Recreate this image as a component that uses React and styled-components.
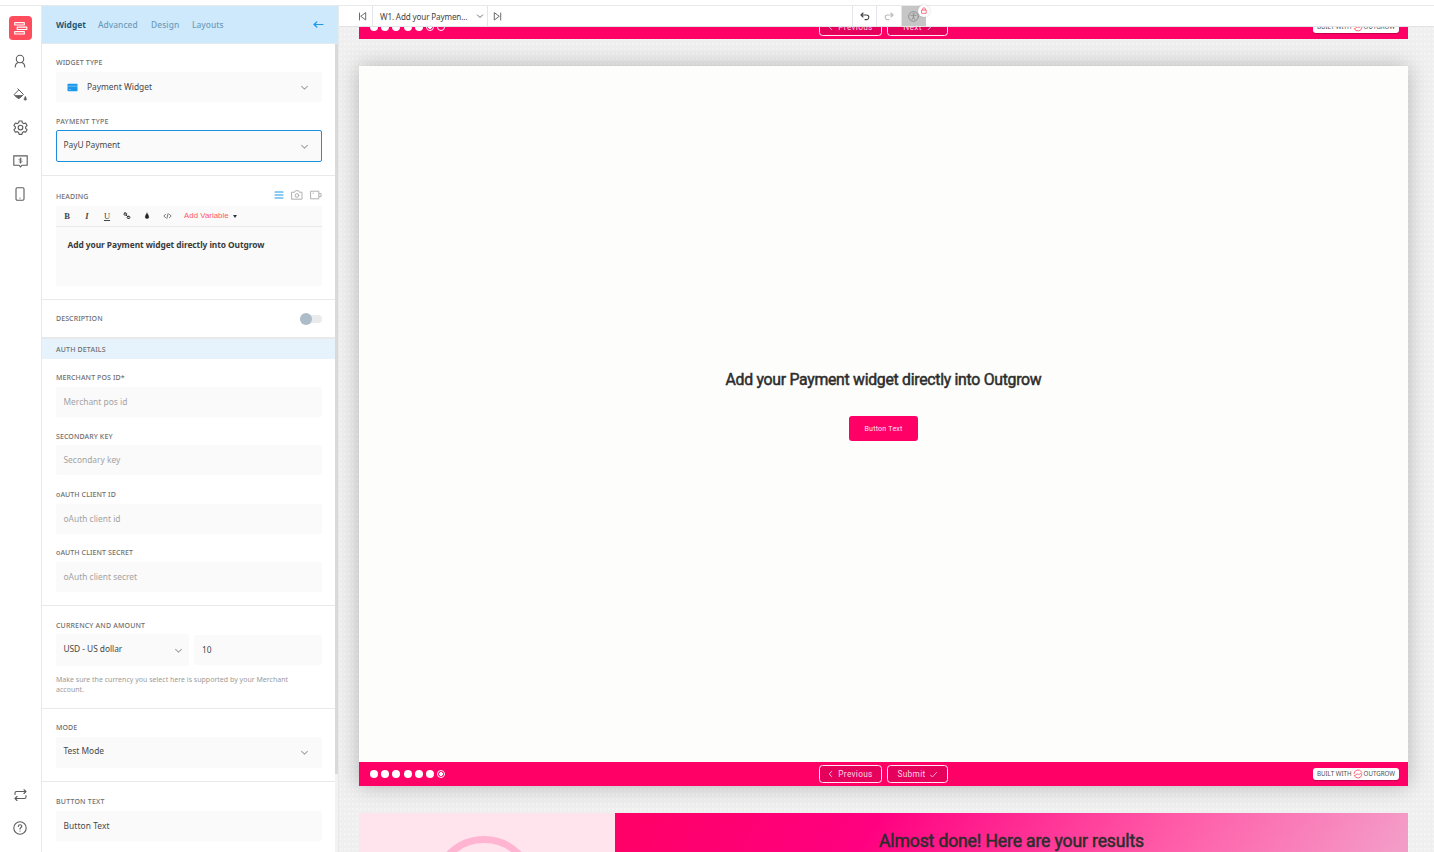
import React from 'react';
import styled, { createGlobalStyle, css } from 'styled-components';

const GlobalStyle = createGlobalStyle`
	* {
		box-sizing: border-box;
	}
	body {
		margin: 0;
		background: #fff;
		font-family: "Noto Sans", "Open Sans", sans-serif;
		overflow: hidden;
	}
`;

const Page = styled.div`
	display: flex;
	flex-direction: column;
	width: 1434px;
	height: 852px;
	padding-top: 5px;
	overflow: hidden;
`;

const Main = styled.div`
	display: flex;
	flex: 1;
	min-height: 0;
	border-top: 1px solid #e7e9eb;
`;

const Svg = styled.svg`
	display: block;
	flex: none;
	fill: none;
	stroke: ${p => p.$color || '#5c5c5c'};
	stroke-width: ${p => p.$stroke || 1.1};
	stroke-linecap: round;
	stroke-linejoin: round;
`;

const Text = styled.span`
	display: block;
	white-space: nowrap;
	letter-spacing: ${p => p.$ls || 0}px;
`;

/* ---------- left rail ---------- */

const Rail = styled.nav`
	display: flex;
	flex-direction: column;
	align-items: center;
	width: 42px;
	padding: 10px 1px 16px 0;
	border-right: 1px solid #e7e9eb;
	flex: none;
`;

const Logo = styled.div`
	display: flex;
	align-items: center;
	justify-content: center;
	width: 23px;
	height: 24px;
	border-radius: 4px;
	background: #ff4d5e;
	margin-bottom: 13px;
`;

const RailItem = styled.div`
	display: flex;
	align-items: center;
	justify-content: center;
	width: 16px;
	height: 16px;
	margin-bottom: ${p => p.$gap || 17}px;
`;

const Spacer = styled.div`
	flex: 1;
`;

/* ---------- settings panel ---------- */

const Panel = styled.aside`
	display: flex;
	flex-direction: column;
	width: 297px;
	flex: none;
	border-right: 1px solid #e7e9eb;
`;

const Tabs = styled.div`
	display: flex;
	align-items: center;
	height: 38px;
	flex: none;
	padding: 0 14px;
	background: #cfe9fc;
	border-bottom: 1px solid #e3eaf0;
`;

const Tab = styled(Text)`
	width: ${p => p.$width}px;
	font-size: 8.4px;
	line-height: 12px;
	font-weight: ${p => (p.$active ? 700 : 500)};
	color: ${p => (p.$active ? '#1d5878' : '#6c9db9')};
`;

const Scroller = styled.div`
	display: flex;
	flex: 1;
	min-height: 0;
`;

const Settings = styled.div`
	width: 293px;
	overflow: hidden;
`;

const Track = styled.div`
	width: 3px;
	background: #f2f2f2;
`;

const Thumb = styled.div`
	height: 730px;
	background: #d9d9d9;
`;

const Section = styled.section`
	height: ${p => p.$height}px;
	padding: ${p => p.$top || 0}px 13px 0 14px;
	border-bottom: ${p => p.$border || 1}px solid #e7e9eb;
`;

const Label = styled(Text)`
	height: 10px;
	font-size: 7px;
	line-height: 10px;
	font-weight: 500;
	letter-spacing: ${p => p.$ls || 0.08}px;
	color: #6f6f6f;
	margin-bottom: ${p => (p.$gap === undefined ? 4 : p.$gap)}px;
`;

const Field = styled.div`
	display: flex;
	align-items: center;
	justify-content: space-between;
	width: ${p => (p.$width ? `${p.$width}px` : 'auto')};
	height: ${p => p.$height || 30}px;
	padding: 0 ${p => p.$right || 13}px 0 ${p => p.$left || 7.5}px;
	margin-bottom: ${p => p.$gap || 0}px;
	border-radius: 2px;
	background: #fafafa;
	font-size: 8.4px;
	line-height: 12px;
	color: ${p => (p.$placeholder ? '#a3a3a3' : '#484848')};
	${p => p.$raise && css`
		> span {
			margin-bottom: ${p.$raise}px;
		}
	`}
	${p => p.$focused && css`
		border: 1px solid #1c8fdc;
		padding-left: 6.5px;
		padding-right: 12px;
	`}
`;

const WithIcon = styled.div`
	display: flex;
	align-items: center;
	gap: 9px;
`;

const Row = styled.div`
	display: flex;
	align-items: center;
	justify-content: ${p => (p.$between ? 'space-between' : 'flex-start')};
	gap: ${p => p.$gap || 0}px;
	${p => p.$height && css`height: ${p.$height}px;`}
`;

const HeadingRow = styled(Row)`
	align-items: flex-start;
	height: 17px;
	padding-top: 3px;
`;

const HeadingIcons = styled(Row)`
	height: 6px;
`;

const Editor = styled.div`
	height: 80px;
	background: #fafafa;
	border-radius: 2px;
`;

const EditorBar = styled.div`
	display: flex;
	align-items: center;
	height: 21px;
	padding: 0 0 1px 6px;
	border-bottom: 1px solid #e7e9eb;
`;

const Tool = styled.div`
	display: flex;
	align-items: center;
	justify-content: center;
	width: 10px;
	height: 12px;
	margin-right: 10px;
	font: ${p => p.$style || 'normal'} ${p => p.$weight || 400} 8.5px/12px "Liberation Serif", serif;
	text-decoration: ${p => (p.$underline ? 'underline' : 'none')};
	color: #444;
`;

const AddVariable = styled.div`
	display: flex;
	align-items: center;
	gap: 4px;
	margin: 1px 0 0 2px;
	font: 7.8px/12px "Liberation Sans", sans-serif;
	color: #ff5468;
`;

const Caret = styled.i`
	border: 2.5px solid transparent;
	border-top: 3px solid #333;
	border-bottom: 0;
	margin-top: 1px;
`;

const EditorText = styled(Text)`
	padding: 11px 0 0 11.5px;
	font-size: 8.4px;
	line-height: 13px;
	font-weight: 700;
	color: #3a3a3a;
`;

const Toggle = styled.div`
	display: flex;
	align-items: center;
	width: 22px;
	height: 8px;
	border-radius: 4px;
	background: #e9ebed;
`;

const Knob = styled.div`
	width: 12px;
	height: 12px;
	border-radius: 50%;
	background: #adbcc9;
`;

const SubHeader = styled.div`
	display: flex;
	align-items: center;
	height: 20px;
	padding: 2px 0 0 14px;
	background: #e6f3fc;
`;

const Note = styled.div`
	margin-top: 9px;
	font-size: 7px;
	line-height: 10px;
	color: #9b9b9b;
`;

/* ---------- work area ---------- */

const Work = styled.main`
	display: flex;
	flex-direction: column;
	flex: 1;
	min-width: 0;
`;

const Toolbar = styled.div`
	display: flex;
	height: 21px;
	flex: none;
	background: #fff;
	border-bottom: 1px solid #e2e4e6;
`;

const Cell = styled.div`
	display: flex;
	align-items: center;
	justify-content: ${p => p.$justify || 'center'};
	position: relative;
	width: ${p => p.$width}px;
	padding: ${p => p.$pad || 0};
	background: ${p => p.$bg || 'transparent'};
	border-right: ${p => (p.$line ? '1px solid #e2e6ea' : 'none')};
	font-size: 8.1px;
	color: #444;
`;

const LockBadge = styled.div`
	position: absolute;
	top: -1px;
	right: -4px;
	display: flex;
	align-items: center;
	justify-content: center;
	width: 12px;
	height: 12px;
	padding-bottom: 1px;
	border-radius: 50%;
	background: #fff;
	box-shadow: 0 0 2px rgba(0, 0, 0, .2);
	z-index: 1;
`;

const Canvas = styled.div`
	flex: 1;
	min-height: 0;
	overflow: hidden;
	padding: 0 26px 0 20px;
	background-color: #efefef;
	background-image: radial-gradient(circle at 2px 2px, #f8f8f8 0.5px, transparent 1px);
	background-size: 4px 5px;
`;

const Clipped = styled.div`
	display: flex;
	flex-direction: column;
	justify-content: flex-end;
	height: 12px;
	overflow: hidden;
	margin-bottom: 27px;
`;

const Slide = styled.div`
	display: flex;
	flex-direction: column;
	height: 720px;
	margin-bottom: 27px;
	background: #fdfdfb;
	box-shadow: 0 0 20px rgba(0, 0, 0, .25);
`;

const SlideBody = styled.div`
	display: flex;
	flex-direction: column;
	align-items: center;
	flex: 1;
	padding-top: 303px;
`;

const SlideTitle = styled(Text).attrs({ as: 'h1' })`
	margin: 0;
	font: 400 15.8px/22px Roboto, sans-serif;
	-webkit-text-stroke: .5px #2d2d2d;
	color: #2d2d2d;
`;

const PinkButton = styled.div`
	display: flex;
	align-items: center;
	justify-content: center;
	width: 69px;
	height: 25px;
	margin-top: 25px;
	border-radius: 3px;
	background: #ff0066;
	font: 400 7.1px/10px Roboto, sans-serif;
	color: #ffe3ee;
`;

const FooterBar = styled.div`
	display: grid;
	grid-template-columns: 1fr auto 1fr;
	align-items: center;
	height: 24px;
	flex: none;
	padding: 0 9px 0 11px;
	background: #ff0066;
`;

const Dots = styled.div`
	display: flex;
	gap: 3.2px;
`;

const Dot = styled.div`
	width: 8px;
	height: 8px;
	border-radius: 50%;
	background: #fff;
	${p => p.$ring && css`
		border: 1px solid #fff;
		background: ${p.$current ? 'radial-gradient(circle, #fff 1.6px, #ff0066 2.2px)' : '#ff0066'};
	`}
`;

const NavButtons = styled.div`
	display: flex;
	gap: 5px;
	margin-left: -2px;
`;

const NavButton = styled.div`
	display: flex;
	align-items: center;
	justify-content: center;
	gap: ${p => p.$gap || 5}px;
	width: ${p => p.$width}px;
	height: 18px;
	border: 1px solid #ffe8f1;
	border-radius: 3.5px;
	background: #e5005c;
	font: 400 8.3px/12px Roboto, sans-serif;
	color: #ffd5e5;
`;

const Built = styled.div`
	justify-self: end;
	display: flex;
	align-items: center;
	justify-content: center;
	gap: 1px;
	width: 86px;
	height: 12px;
	border-radius: 3px;
	background: #fff;
	font-size: 6.2px;
	line-height: 12px;
	color: #4d4d4d;
	box-shadow: 0 1px 1px rgba(0, 0, 0, .25);
`;

const Results = styled.div`
	display: flex;
	height: 39px;
	overflow: hidden;
`;

const ResultsAside = styled.div`
	display: flex;
	justify-content: center;
	width: 256px;
	padding: 23px 6px 0 0;
	background: #ffe4ee;
`;

const Ring = styled.div`
	width: 104px;
	height: 104px;
	flex: none;
	border: 7px solid #ffb5d2;
	border-radius: 50%;
`;

const ResultsMain = styled.div`
	flex: 1;
	display: flex;
	justify-content: center;
	padding-top: 16px;
	background: linear-gradient(121deg, #ff0066 0, #ff0080 227px, #ff5ca8 490px, #f49cc8 690px);
`;

const ResultsTitle = styled(Text).attrs({ as: 'h2' })`
	margin: 0;
	font: 400 17.6px/24px Roboto, sans-serif;
	-webkit-text-stroke: .5px #2d2d2d;
	color: #2d2d2d;
`;

const Chevron = ({ color = '#a5a5a5', size = 9 }) => (
	<Svg width={size} height={size} viewBox="0 0 9 9" $color={color}>
		<path d="M1.6 3.300l2.900 2.900 2.900-2.900" />
	</Svg>
);

const OutgrowMark = () => (
	<Svg width="10" height="10" viewBox="0 0 10 10" $color="#ff5c6c" $stroke={0.9}>
		<path d="M8.500 2.800A4.100 4.100 0 0 0 1 4.600M1.100 6.300A4.100 4.100 0 0 0 9 5.400M2.300 6.300L4.200 4.900l1.400.8L9 3.800" />
	</Svg>
);

const SlideFooter = ({ next, last }) => (
	<FooterBar>
		<Dots>
			{[0, 1, 2, 3, 4].map(i => <Dot key={i} />)}
			<Dot $ring={!last} $current={!last} />
			<Dot $ring $current={last} />
		</Dots>
		<NavButtons>
			<NavButton $width={63}>
				<Svg width="5" height="8" viewBox="0 0 5 8" $color="#ffd5e5" $stroke={0.9}><path d="M3.700 1.400L1.200 4l2.500 2.600" /></Svg>
				<Text $ls={0.3}>Previous</Text>
			</NavButton>
			<NavButton $width={61} $gap={5}>
				<Text $ls={0.3}>{next}</Text>
				{last
					? <Svg width="7" height="8" viewBox="0 0 7 8" $color="#ffd5e5" $stroke={0.8}><path d="M.5 5L2.400 7 6.500 2.500" /></Svg>
					: <Svg width="5" height="8" viewBox="0 0 5 8" $color="#ffd5e5" $stroke={0.9}><path d="M1.200 1.400L3.700 4 1.200 6.600" /></Svg>}
			</NavButton>
		</NavButtons>
		<Built>
			<Text>BUILT WITH</Text>
			<OutgrowMark />
			<Text>OUTGROW</Text>
		</Built>
	</FooterBar>
);

const authFields = [
	{ label: 'MERCHANT POS ID*', hint: 'Merchant pos id', gap: 15, labelGap: 4 },
	{ label: 'SECONDARY KEY', hint: 'Secondary key', gap: 15, labelGap: 3 },
	{ label: 'oAUTH CLIENT ID', hint: 'oAuth client id', gap: 14, labelGap: 4 },
	{ label: 'oAUTH CLIENT SECRET', hint: 'oAuth client secret', gap: 0, labelGap: 4 },
];

const SideRail = () => (
	<Rail>
		<Logo>
			<Svg width="15" height="15" viewBox="0 0 15 15" $color="#fff" $stroke={1.1}>
				<rect x="1.700" y="1.600" width="9.600" height="2.400" />
				<rect x="4.200" y="6.100" width="9.600" height="2.400" />
				<rect x="1.700" y="10.600" width="9.600" height="2.400" />
			</Svg>
		</Logo>
		<RailItem>
			<Svg width="14" height="14" viewBox="0 0 14 14">
				<circle cx="7" cy="5" r="3.700" />
				<path d="M2.200 13c.2-2.900 1.600-4.200 3.300-4.500M11.800 13c-.2-2.900-1.600-4.200-3.300-4.500" />
			</Svg>
		</RailItem>
		<RailItem>
			<Svg width="15" height="15" viewBox="0 0 15 15" $stroke={1}>
				<path d="M1.200 7.500L5.800 2.800l4.700 4.700-4.200 3.700h-.9zM4.800 1.800l1 1" />
				<path d="M2.600 8.700h6.500l-2.900 2.400h-.8z" fill="#5c5c5c" />
				<path d="M12.300 9.600c1.600 2.300 1.600 3.700 0 3.700s-1.600-1.400 0-3.700z" fill="#5c5c5c" strokeWidth=".5" />
			</Svg>
		</RailItem>
		<RailItem $gap={18}>
			<Svg width="15" height="15" viewBox="0 0 24 24" $stroke={1.8}>
				<path d="M9.700 1.500h4.600l.7 3 2.200 1.300 3-.9 2.300 4-2.300 2.100v2.400l2.300 2.100-2.300 4-3-.9-2.200 1.300-.7 3H9.700l-.7-3-2.200-1.300-3 .9-2.300-4 2.300-2.100V11L1.500 8.900l2.300-4 3 .9L9 4.500z" />
				<circle cx="12" cy="12" r="3.700" />
			</Svg>
		</RailItem>
		<RailItem>
			<Svg width="15" height="14" viewBox="0 0 15 14">
				<path d="M.8 1.900h13.400v9.300H9l-1.500 1.700L6 11.200H.8z" strokeLinejoin="miter" />
				<path d="M9 5.200c-.3-.6-2.900-.8-2.900.4 0 1.300 2.900.6 2.900 1.900 0 1.200-2.600 1-3 .3M7.500 4v5.200" strokeWidth=".8" />
			</Svg>
		</RailItem>
		<RailItem>
			<Svg width="10" height="14" viewBox="0 0 10 14">
				<rect x="1" y=".8" width="8" height="12.400" rx="1.200" />
				<path d="M5 11v.1" />
			</Svg>
		</RailItem>
		<Spacer />
		<RailItem>
			<Svg width="13" height="13" viewBox="0 0 13 13">
				<path d="M1 5.500V4c0-1 .6-1.500 1.500-1.500h9.300M10 .6l2 1.900-2 2M12 6.500V8c0 1-.6 1.500-1.500 1.500H1.200M3 7.500l-2 2 2 2" />
			</Svg>
		</RailItem>
		<RailItem $gap={0.01}>
			<Svg width="14" height="14" viewBox="0 0 14 14">
				<circle cx="7" cy="7" r="6.200" />
				<path d="M5.300 5.500c.1-2.300 3.500-2.200 3.500-.2C8.800 6.500 7 6.600 7 8.100M7 10v.1" />
			</Svg>
		</RailItem>
	</Rail>
);

const SettingsPanel = () => (
	<Panel>
		<Tabs>
			<Tab $active $width={42}>Widget</Tab>
			<Tab $width={53} $ls={0.06}>Advanced</Tab>
			<Tab $width={41} $ls={0.1}>Design</Tab>
			<Tab $width={121} $ls={0.03}>Layouts</Tab>
			<Svg width="11" height="9" viewBox="0 0 11 9" $color="#1c97ea" $stroke={1.2}>
				<path d="M10 4.500H1M3.800 2L1 4.500 3.800 7" />
			</Svg>
		</Tabs>
		<Scroller>
			<Settings>
				<Section $height={132} $top={14}>
					<Label $ls={0.13}>WIDGET TYPE</Label>
					<Field $left={11} $gap={15}>
						<WithIcon>
							<svg width="11" height="9" viewBox="0 0 11 9">
								<rect x=".5" y=".8" width="10" height="7.400" rx=".7" fill="#1c97ea" />
								<path d="M.5 3.200h10M2 6.600h2" stroke="#a9d8f7" strokeWidth=".6" />
							</svg>
							<Text>Payment Widget</Text>
						</WithIcon>
						<Chevron />
					</Field>
					<Label $gap={3} $ls={0.24}>PAYMENT TYPE</Label>
					<Field $focused $height={32} $raise={2}>
						<Text $ls={-0.05}>PayU Payment</Text>
						<Chevron />
					</Field>
				</Section>
				<Section $height={124} $top={13}>
					<HeadingRow $between>
						<Label $gap={0}>HEADING</Label>
						<HeadingIcons $gap={7}>
							<Svg width="10" height="10" viewBox="0 0 10 10" $color="#1c97ea"><path d="M1 2h8M1 5h8M1 8h8" /></Svg>
							<Svg width="12" height="10" viewBox="0 0 12 10" $color="#b0b0b0" $stroke={1}>
								<path d="M1 2.200h2.700l.8-1.500h3l.8 1.500H11v7H1z" /><circle cx="6" cy="5.500" r="1.800" />
							</Svg>
							<Svg width="12" height="10" viewBox="0 0 12 10" $color="#b0b0b0" $stroke={1}>
								<path d="M1 1.200h7.800v7.600H1zM9.200 3.600h1.900v3H9.200M3 3.200h.5" />
							</Svg>
						</HeadingIcons>
					</HeadingRow>
					<Editor>
						<EditorBar>
							<Tool $weight={700}>B</Tool>
							<Tool $style="italic" $weight={700}>I</Tool>
							<Tool $underline>U</Tool>
							<Tool>
								<Svg width="8" height="8" viewBox="0 0 8 8" $color="#333" $stroke={1}>
									<rect x="1" y="1" width="2.700" height="2.200" rx=".9" /><rect x="4.200" y="4.300" width="2.700" height="2.200" rx=".9" /><path d="M3 3l2 2" />
								</Svg>
							</Tool>
							<Tool>
								<Svg width="6" height="8" viewBox="0 0 6 8" $color="#222" $stroke={0.3}><path d="M3 1c2.400 3.300 2.400 5.600 0 5.600S.6 4.300 3 1z" fill="#222" /></Svg>
							</Tool>
							<Tool>
								<Svg width="9" height="8" viewBox="0 0 9 8" $color="#555" $stroke={0.8}><path d="M2.500 2.300L.8 4l1.700 1.700M6.500 2.300L8.200 4 6.500 5.700M5.100 1.600L3.900 6.400" /></Svg>
							</Tool>
							<AddVariable>
								<Text $ls={0.05}>Add Variable</Text>
								<Caret />
							</AddVariable>
						</EditorBar>
						<EditorText $ls={-0.07}>Add your Payment widget directly into Outgrow</EditorText>
					</Editor>
				</Section>
				<Section $height={39} $top={14} $border={2}>
					<Row $between $height={10}>
						<Label $gap={0}>DESCRIPTION</Label>
						<Toggle><Knob /></Toggle>
					</Row>
				</Section>
				<SubHeader><Label $gap={0} $ls={0.15}>AUTH DETAILS</Label></SubHeader>
				<Section $height={247} $top={14}>
					{authFields.map(f => (
						<React.Fragment key={f.label}>
							<Label $gap={f.labelGap} $ls={0.1}>{f.label}</Label>
							<Field $placeholder $gap={f.gap}><Text $ls={0.02}>{f.hint}</Text></Field>
						</React.Fragment>
					))}
				</Section>
				<Section $height={103} $top={15}>
					<Label $gap={3} $ls={0.16}>CURRENCY AND AMOUNT</Label>
					<Row $gap={5}>
						<Field $width={133} $height={32} $right={6} $raise={2}>
							<Text $ls={-0.05}>USD - US dollar</Text>
							<Chevron />
						</Field>
						<Field $width={128} $left={8}><Text>10</Text></Field>
					</Row>
					<Note>
						<Text $ls={0.01}>Make sure the currency you select here is supported by your Merchant</Text>
						<Text>account.</Text>
					</Note>
				</Section>
				<Section $height={73} $top={14}>
					<Label>MODE</Label>
					<Field $height={31} $raise={3}>
						<Text>Test Mode</Text>
						<Chevron />
					</Field>
				</Section>
				<Section $height={90} $top={15}>
					<Label $ls={0.2}>BUTTON TEXT</Label>
					<Field><Text $ls={0.08}>Button Text</Text></Field>
				</Section>
			</Settings>
			<Track><Thumb /></Track>
		</Scroller>
	</Panel>
);

const TopToolbar = () => (
	<Toolbar>
		<Cell $width={34} $line $justify="flex-end" $pad="0 5px 0 0">
			<Svg width="9" height="9" viewBox="0 0 9 9" $stroke={0.9}><path d="M1.500 1v7M7.700 1v7L3 4.500z" /></Svg>
		</Cell>
		<Cell $width={115} $line $justify="space-between" $pad="0 3px 0 7px">
			<Text $ls={-0.14}>W1. Add your Paymen...</Text>
			<Chevron color="#666" size={8} />
		</Cell>
		<Cell $width={18}>
			<Svg width="9" height="9" viewBox="0 0 9 9" $stroke={0.9}><path d="M7.700 1v7M1.300 1v7L6 4.500z" /></Svg>
		</Cell>
		<Cell $width={347} $line />
		<Cell $width={24} $line>
			<Svg width="10" height="9" viewBox="0 0 10 9" $color="#444"><path d="M3 1L1 3l2 2M1 3h5.500a2.300 2.300 0 0 1 0 4.600H5" /></Svg>
		</Cell>
		<Cell $width={25} $line>
			<Svg width="10" height="9" viewBox="0 0 10 9" $color="#bbb"><path d="M7 1l2 2-2 2M9 3H3.500a2.300 2.300 0 0 0 0 4.600H5" /></Svg>
		</Cell>
		<Cell $width={24} $bg="#c6c6c6" $pad="0 2px 0 0">
			<Svg width="11" height="11" viewBox="0 0 11 11" $color="#8d8d8d" $stroke={0.9}>
				<circle cx="5.500" cy="5.500" r="4.900" />
				<circle cx="5.500" cy="2.700" r=".4" />
				<path d="M2.800 4.300h5.400M5.500 4.300v1.700M5.500 6L4 8.600M5.500 6L7 8.600" />
			</Svg>
			<LockBadge>
				<Svg width="6" height="7" viewBox="0 0 6 7" $color="#ff5468" $stroke={0.8}>
					<path d="M.8 3h4.400v3.300H.8zM1.700 3V1.800c0-1.400 2.600-1.400 2.600 0V3" />
				</Svg>
			</LockBadge>
		</Cell>
	</Toolbar>
);

const App = () => (
	<>
		<GlobalStyle />
		<Page>
			<Main>
				<SideRail />
				<SettingsPanel />
				<Work>
					<TopToolbar />
					<Canvas>
						<Clipped><SlideFooter next="Next" /></Clipped>
						<Slide>
							<SlideBody>
								<SlideTitle $ls={-0.28}>Add your Payment widget directly into Outgrow</SlideTitle>
								<PinkButton><Text $ls={0.2}>Button Text</Text></PinkButton>
							</SlideBody>
							<SlideFooter next="Submit" last />
						</Slide>
						<Results>
							<ResultsAside><Ring /></ResultsAside>
							<ResultsMain>
								<ResultsTitle $ls={-0.15}>Almost done! Here are your results</ResultsTitle>
							</ResultsMain>
						</Results>
					</Canvas>
				</Work>
			</Main>
		</Page>
	</>
);

export default App;
